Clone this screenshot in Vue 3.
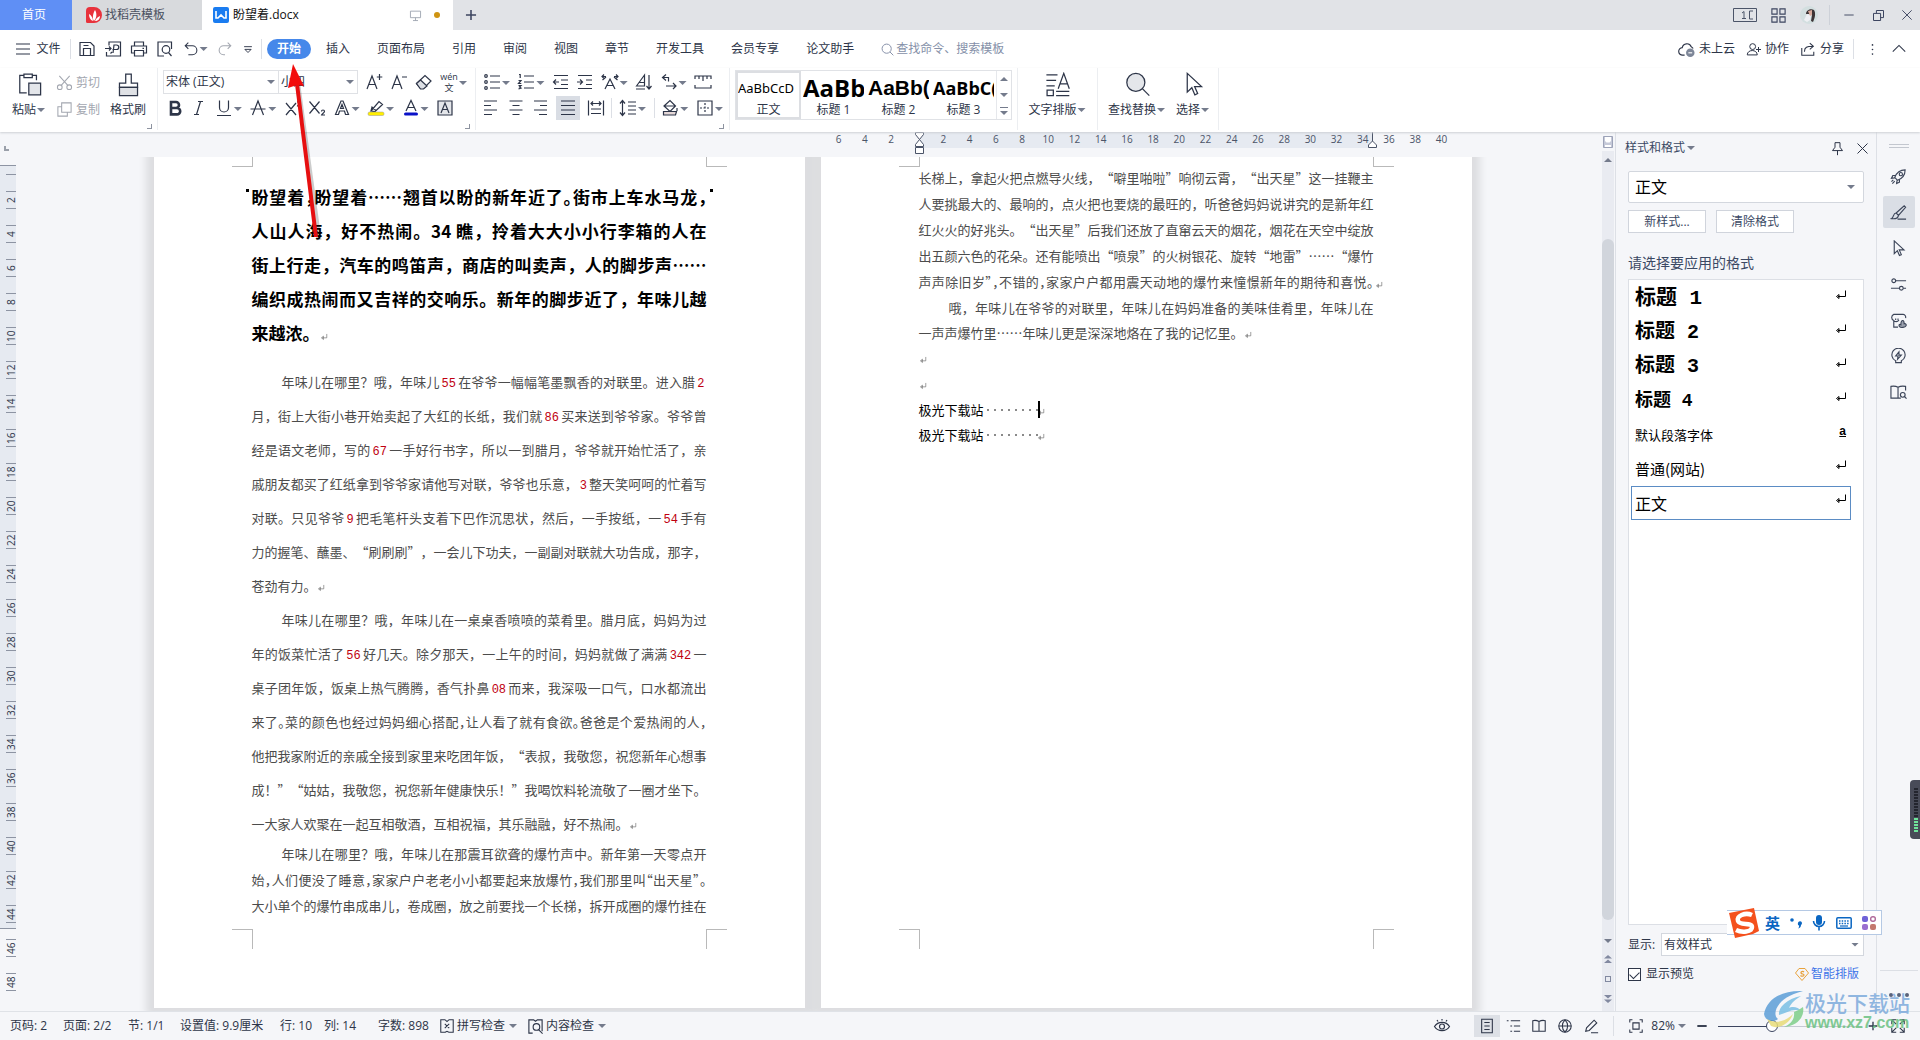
<script setup>
import { h, ref } from 'vue'

const icons = {
  save: '<path d="M2 2.500h10.500l3.500 3.500v9.500h-14zM5.500 15.500v-7h7v7M5.500 5.500h5"/>',
  pdf: '<path d="M5 5.500V2h11.500v14H2.500v-4M1 8.500h6M5 6.500l2 2-2 2M9 13l1-8h2.500a2 2 0 0 1 0 4.500H8.500M8 12l-1.500 1.500"/>',
  print: '<path d="M4.500 6V2h9v4M4.500 13h-3V6h15v7h-3M4.500 10.500h9v5.500h-9zM12.500 8.300h1.500"/>',
  preview: '<path d="M8 16H2V2h13.500v7M12.500 12.500l3 3.500"/><circle cx="10" cy="9.500" r="3.800"/>',
  undo: '<path d="M6 1.800 2.500 5.300 6 8.800M2.500 5.300h8a5 5 0 0 1 0 10.200H6"/>',
  redo: '<path d="M12 1.800l3.500 3.500L12 8.800M15.500 5.300h-8a5 5 0 0 0 0 10.200H9"/>',
  more: '<path d="M4 6h10M5 9.500l4 4 4-4z"/>',
  menu: '<path d="M2 4h14M2 9h14M2 14h14"/>',
  search: '<circle cx="8" cy="8" r="5.500"/><path d="M12 12l4 4"/>',
  aplus: '<path d="M2 16 7 3l5 13M4 11.500h6.200M14.500 1v6M11.800 4h5.500"/>',
  aminus: '<path d="M2 16 7 3l5 13M4 11.500h6.200M12 4h5"/>',
  eraser: '<path d="M1.500 10.500 10 2.500l6 5.500-7.500 7.500H5.500z"/><path d="M5.500 7l6.500 6-3.500 3H5.500l-4-5.500z" fill="#dcdfe4"/>',
  bold: '<path d="M5 3h5a3 3 0 0 1 0 6H5zM5 9h6a3.200 3.200 0 0 1 0 6.400H5z" stroke-width="2.600"/>',
  italic: '<path d="M8 2.500h5M4 15.500h5M10.500 2.500l-4 13"/>',
  underline: '<path d="M4.500 1.500v7a4.500 4.500 0 0 0 9 0v-7M2 16.500h14"/>',
  strike: '<path d="M3.500 16 9 2l5.500 14M1.500 10h15"/>',
  sup: '<path d="M2 4l10 12M12 4 2 16M13.500 3.500c0-2 3-2 3 0 0 1.200-3 2.500-3 3.500h3.500"/>',
  sub: '<path d="M1.500 2.500l10 12M11.500 2.500l-10 12M13.500 12.500c0-2 3-2 3 0 0 1.200-3 2.500-3 3.500h3.500"/>',
  outline: '<path d="M2.500 15.500 8 2h2l5.500 13.500h-3L11.500 12h-5l-1 3.500zM7.500 9.500h3L9 5.500z"/>',
  mark: '<path d="M4 12 12 2.500l3.500 3L8 12.500zM4 12l1-4 3.500 3"/><rect x="1" y="13" width="16" height="3.500" rx="1.500" fill="#ffee00" stroke="#999" stroke-width=".5"/>',
  color: '<path d="M4 12 9 1.500l5 10.500M6 8.500h6"/><rect x="2" y="13.500" width="14" height="3" rx="1.500" fill="#0a12c8" stroke="none"/>',
  boxa: '<path d="M2 2h14v14H2z" fill="#e4e6ea"/><path d="M5 14 9 4l4 10M6.500 10.500h5"/>',
  bullets: '<circle cx="3" cy="3" r="1.300"/><circle cx="3" cy="9" r="1.300"/><circle cx="3" cy="15" r="1.300"/><path d="M7 3h10M7 9h10M7 15h10"/>',
  numbers: '<path d="M2 1.500h1.200V5M1.500 7.500h2.500L1.500 10.500h2.800M1.500 12.500h2.500l-1.500 1.500 1.500 1-2.500 1M7 3h10M7 9h10M7 15h10"/>',
  outdent: '<path d="M2 2.500h14M9 7h7M9 11.500h7M2 15.500h14M7 9H1.500M4 6.500 1.500 9 4 11.500"/>',
  indent: '<path d="M2 2.500h14M10 7h6M10 11.500h6M2 15.500h14M1 9h5.500M4 6.500 6.500 9 4 11.500"/>',
  width: '<path d="M4 16 9 6l5 10M5.500 12.500h7M5 3.500H1.500M3 1.500l-2 2 2 2M13 3.500h3.500M15 1.500l2 2-2 2M1.500 7 5 4M16.500 7 13 4"/>',
  sort: '<path d="M1.500 13 9.500 2v11zM4.500 9.500h5M1 16h9M14 2v14M11.500 13l2.500 3 2.500-3"/>',
  wrap: '<path d="M6 1.500 2.500 4.500 6 7.500M2.500 4.500h6v4M6 13h9.500M13 10l3 3-3 3"/>',
  tabs: '<path d="M1 6V3h16v3M5 3v3M9 3v5M13 3v3M1 12v3h16v-3M6 15h6"/>',
  left: '<path d="M2 2h13M2 6.500h7M2 11h13M2 15.500h8"/>',
  center: '<path d="M2.500 2h13M5.500 6.500h7M2.500 11h13M5.500 15.500h7"/>',
  right: '<path d="M3 2h13M9 6.500h7M3 11h13M8 15.500h8"/>',
  justify: '<path d="M2 2h14M2 6.500h14M2 11h14M2 15.500h14"/>',
  spread: '<path d="M1.500 1.500v15M16.500 1.500v15M4 4.500h10M6 2.500l-2 2 2 2M12 2.500l2 2-2 2M4 10h10M4 14.500h10"/>',
  spacing: '<path d="M3.500 2v14M1 4.500l2.500-3L6 4.500M1 13.500l2.500 3 2.500-3M9 3h8M9 7h8M9 11h8M9 15h8"/>',
  fill: '<path d="M3 7 9 1.500l5.500 5.500-5.500 5.500zM3 7h11.500M16 9v3"/><path d="M2.500 12.500h13l-1 3.500h-12z" fill="#e5d8d8"/>',
  borders: '<path d="M2 2h14v14H2z"/><path d="M9 4v10M4 9h10" stroke-dasharray="2 1.500"/>',
  cut: '<circle cx="4" cy="14" r="2.500"/><circle cx="14" cy="14" r="2.500"/><path d="M3.500 2l9 10M14.500 2l-9 10"/>',
  copy: '<path d="M6 2h10v10H6zM6 6H2v10h10v-4"/>',
  paste: '<path d="M7 15H2V2.500h3M11 2.500h3V6M5 1.500h6v2.500H5z"/><path d="M8.500 8H17v8.500H8.500z" fill="#e4e6ea"/>',
  brush: '<path d="M7 1.500h4V8h4.500v3h-13V8H7z"/><path d="M2.500 11h13v6h-13z" fill="#dfe1e5"/>',
  layout: '<path d="M1 2h8M1 6h7M1 10h6M9.500 12 13.500 1l4 11M11 8.500h5M8 14h9.500M8 17h9.500"/><path d="M1.500 13h4.500v4H1.500z"/>',
  find: '<circle cx="7.800" cy="7.500" r="6.500" fill="#e4e6ea"/><path d="M12.500 12l5 5"/>',
  pointer: '<path d="M4.500 1v13.500l3.300-3.200 2.200 5.200 2-1-2.200-5h5z"/>',
  cloud: '<path d="M7 15H5a4 4 0 0 1-.5-8A5 5 0 0 1 14 6a4 4 0 0 1 2 2"/><circle cx="13" cy="12.500" r="4.500" fill="#7d8698" stroke="none"/><path d="M11 12.500h4" stroke="#fff"/>',
  person: '<circle cx="8" cy="5.500" r="3.500"/><path d="M1.500 15.500c0-7 12-7 12 0zM15 6v6M12 9h6"/>',
  share: '<path d="M2 8v8h13.500v-4M5 12c0-5 3-6 9-6M11 2.500 15 6l-4 3.500"/>',
  up: '<path d="M2 12 9 5l7 7"/>',
  dots: '<g fill="currentColor" stroke="none"><circle cx="9" cy="3.500" r="1"/><circle cx="9" cy="9" r="1"/><circle cx="9" cy="14.500" r="1"/></g>',
  monitor: '<path d="M2 3h14v9H2zM9 12v4M5.500 16h7"/>',
  plus: '<path d="M9 2.500v13M2.500 9h13" stroke-width="2"/>',
  apps: '<path d="M2 2h5.500v5.500H2zM10.500 2H16v5.500h-5.500zM2 10.500h5.500V16H2zM10.500 10.500H16V16h-5.500z"/>',
  min: '<path d="M3 9h12"/>',
  restore: '<path d="M3 6.500h8.500V15H3zM6.500 6.500V3H15v8.500h-3.500"/>',
  close: '<path d="M3 3l12 12M15 3 3 15"/>',
  pin: '<path d="M6 2h6v5.500l3 4H3l3-4zM9 11.500V17"/>',
  rocket: '<path d="M5 10C7 5 11 2 16 2c0 5-3 9-8 11zM6 8H3l-1.500 3 3.500-.5M10 12v3l-3 1.500.5-3.500M3.500 12.500l-2 2M5 14l-2.500 2.500"/><circle cx="11.500" cy="6.500" r="1.700"/>',
  pen: '<path d="M6.500 9.500 15 2l1.500 1.500L9 12zM6.500 9.500C3 9.500 4.500 14 1.500 15.500c4 .5 7-.5 7.500-3.500M8 16h9"/>',
  sliders: '<circle cx="4" cy="5" r="2"/><path d="M6 5h11M1 13h9M14 13h3"/><circle cx="12" cy="13" r="2"/>',
  shape: '<path d="M8.500 16H4V9a3.500 3.500 0 0 1 0-6.500h10a3 3 0 0 1 2.500 4M6 7v1.500M8.500 7v1.500M4 9.500c2 1 4.500.5 5.500-1"/><path d="M10 15.500c-1-2 0-3 1.500-2 0-3 1-4.500 2-4.500s1.500 2 1.500 3.500c1.500-.5 2.500.5 2 2-1 2-5.500 2.500-7 1z" fill="#9ba1ae"/>',
  bulb: '<path d="M6 15.500v-2A7 7 0 1 1 12 13.500v2zM9.500 4 6 8.500h2.500L8 12l4-4.500H9.500z"/>',
  book: '<path d="M8.500 3.500C6 2 3.500 2 1 2.500V15h7.500zM8.500 15V3.500C11 2 14 2 16.500 2.500V7M8.500 15h3"/><circle cx="13.500" cy="11.500" r="2.500"/><path d="M15.500 13.500l2 2"/>',
  eye: '<path d="M1.500 9.500C5 4 13 4 16.500 9.500 13 15 5 15 1.500 9.500zM9 2v1.500M4 3l1 1.500M14 3l-1 1.500"/><circle cx="9" cy="9.500" r="2.500"/>',
  page: '<path d="M3 1.500h12v15H3zM6 5h6M6 9h6M6 13h6"/>',
  list: '<path d="M2 3h2M6.500 3H17M6 9h2M10 9h7M6 15h2M10 15h7"/>',
  read: '<path d="M9 4C6.500 2.500 4 2.500 2 3v12h7zM9 4c2.500-1.500 5-1.500 7-1v12H9z"/>',
  globe: '<circle cx="9" cy="9" r="7"/><path d="M2 9h14M9 2c-4 4-4 10 0 14M9 2c4 4 4 10 0 14"/>',
  write: '<path d="M3 15l1-4 8.500-8.500 3 3L7 14zM9 16.500h8"/>',
  fit: '<path d="M5 2H2v3M13 2h3v3M5 16H2v-3M13 16h3v-3M5.500 5.500h7v7h-7z"/>',
  full: '<path d="M7 2H2v5M11 2h5v5M7 16H2v-5M11 16h5v-5M2 2l5 5M16 2l-5 5M2 16l5-5M16 16l-5-5"/>',
  spell: '<path d="M7 2H2v14h5M11 2h5v14h-5M7 2l2 2 2-2M7 16l2-1 2 1M6.500 6.500l5 5M11.500 6.500l-5 5"/>',
  content: '<path d="M6 16H2V2h5l2 1.500L11 2h5v12"/><circle cx="10" cy="9.500" r="3.500"/><path d="M12.500 12.500l4 4"/>',
  ret: '<path d="M14 3.500v7H5M8 7.500l-3.500 3L8 13.500z"/>',
}
const Icon = (p) => h('svg', {
  class: 'ico', viewBox: '0 0 18 18', width: p.s || 18, height: p.s || 18,
  fill: 'none', stroke: 'currentColor', 'stroke-width': p.w || 1.2, 'aria-hidden': 'true', innerHTML: icons[p.n],
})
Icon.props = ['n', 's', 'w']

const menus = ['插入', '页面布局', '引用', '审阅', '视图', '章节', '开发工具', '会员专享', '论文助手']
const quick = [['save', '保存'], ['pdf', '输出为PDF'], ['print', '打印'], ['preview', '打印预览']]
const fontTop = [['aplus', '增大字号'], ['aminus', '减小字号'], ['eraser', '清除格式']]
const fontBottom = [
  ['bold', '加粗'], ['italic', '倾斜'], ['underline', '下划线', 1], ['strike', '删除线', 1], ['sup', '上标'],
  ['sub', '下标'], ['outline', '文字效果', 1], ['mark', '突出显示', 1], ['color', '字体颜色', 1], ['boxa', '字符底纹'],
]
const paraTop = [
  ['bullets', '项目符号', 1], ['numbers', '编号', 1], ['outdent', '减少缩进'], ['indent', '增加缩进'],
  ['width', '中文版式', 1], ['sort', '排序'], ['wrap', '换行标记', 1], ['tabs', '制表位'],
]
const paraBottom = [
  ['left', '左对齐'], ['center', '居中'], ['right', '右对齐'], ['justify', '两端对齐'], ['spread', '分散对齐'], null,
  ['spacing', '行距', 1], null, ['fill', '底纹颜色', 1], ['borders', '边框', 1],
]
const gallery = [['AaBbCcD', '正文', 'g0'], ['AaBb', '标题 1', 'g1'], ['AaBb(', '标题 2', 'g2'], ['AaBbC(', '标题 3', 'g3']]
const hMarks = [6, 4, 2, '', ...Array.from({ length: 20 }, (_, i) => (i + 1) * 2)]
const vMarks = Array.from({ length: 24 }, (_, i) => (i + 1) * 2)

const heading = [
  ['盼望着，盼望着……翘首以盼的新年近了。街市上车水马龙，', 'half'],
  ['人山人海，好不热闹。34 瞧，拎着大大小小行李箱的人在'],
  ['街上行走，汽车的鸣笛声，商店的叫卖声，人的脚步声……'],
  ['编织成热闹而又吉祥的交响乐。新年的脚步近了，年味儿越'],
  ['来越浓。', 'end'],
]
const wide = [
  [
    ['年味儿在哪里？哦，年味儿55在爷爷一幅幅笔墨飘香的对联里。进入腊2', 'first'],
    ['月，街上大街小巷开始卖起了大红的长纸，我们就86买来送到爷爷家。爷爷曾'],
    ['经是语文老师，写的67一手好行书字，所以一到腊月，爷爷就开始忙活了，亲'],
    ['戚朋友都买了红纸拿到爷爷家请他写对联，爷爷也乐意，3整天笑呵呵的忙着写'],
    ['对联。只见爷爷9把毛笔杆头支着下巴作沉思状，然后，一手按纸，一54手有'],
    ['力的握笔、蘸墨、“刷刷刷”，一会儿下功夫，一副副对联就大功告成，那字，'],
    ['苍劲有力。', 'end'],
  ],
  [
    ['年味儿在哪里？哦，年味儿在一桌桌香喷喷的菜肴里。腊月底，妈妈为过', 'first'],
    ['年的饭菜忙活了56好几天。除夕那天，一上午的时间，妈妈就做了满满342一'],
    ['桌子团年饭，饭桌上热气腾腾，香气扑鼻08而来，我深吸一口气，口水都流出'],
    ['来了。菜的颜色也经过妈妈细心搭配，让人看了就有食欲。爸爸是个爱热闹的人，', 'half'],
    ['他把我家附近的亲戚全接到家里来吃团年饭，“表叔，我敬您，祝您新年心想事'],
    ['成！”“姑姑，我敬您，祝您新年健康快乐！”我喝饮料轮流敬了一圈才坐下。'],
    ['一大家人欢聚在一起互相敬酒，互相祝福，其乐融融，好不热闹。', 'end'],
  ],
]
const tight = [
  ['年味儿在哪里？哦，年味儿在那震耳欲聋的爆竹声中。新年第一天零点开', 'first'],
  ['始，人们便没了睡意，家家户户老老小小都要起来放爆竹，我们那里叫“出天星”。', 'half'],
  ['大小单个的爆竹串成串儿，卷成圈，放之前要找一个长梯，拆开成圈的爆竹挂在'],
]
const second = [
  [
    ['长梯上，拿起火把点燃导火线，“噼里啪啦”响彻云霄，“出天星”这一挂鞭主'],
    ['人要挑最大的、最响的，点火把也要烧的最旺的，听爸爸妈妈说讲究的是新年红'],
    ['红火火的好兆头。“出天星”后我们还放了直窜云天的烟花，烟花在天空中绽放'],
    ['出五颜六色的花朵。还有能喷出“喷泉”的火树银花、旋转“地雷”……“爆竹'],
    ['声声除旧岁”，不错的，家家户户都用震天动地的爆竹来憧憬新年的期待和喜悦。', 'half hang'],
  ],
  [
    ['哦，年味儿在爷爷的对联里，年味儿在妈妈准备的美味佳肴里，年味儿在', 'first'],
    ['一声声爆竹里……年味儿更是深深地烙在了我的记忆里。', 'end'],
  ],
]
const split = (t) => t.split(/(\d+)/).filter(Boolean)
const isNum = (t) => /^\d+$/.test(t)
const marked = (c) => /end|hang/.test(c || '')

const styles = [
  ['标题 1', 's1'], ['标题 2', 's2'], ['标题 3', 's3'], ['标题 4', 's4'],
  ['默认段落字体', 's5'], ['普通(网站)', 's6'], ['正文', 's7'],
]
const rail = ['rocket', 'pen', 'pointer', 'sliders', 'shape', 'bulb', 'book']
const railNames = ['推荐', '样式和格式', '选择', '设置', '素材', '灵感', '阅读']
const views = [['page', '页面视图'], ['list', '大纲视图'], ['read', '阅读版式'], ['globe', 'Web版式'], ['write', '写作模式']]
const zoom = ref(36)
const preview = ref(true)
</script>

<template>
  <div class="app">
    <header class="titlebar">
      <button class="tab home">首页</button>
      <button class="tab docer">
        <svg width="16" height="16" viewBox="0 0 16 16"><path d="M4 0h4a8 8 0 0 1 0 16H1.500A1.500 1.500 0 0 1 0 14.500V4a4 4 0 0 1 4-4z" fill="#e8323c"/><path d="M8 14C6 12 7 6 9 3c2 3 2 8-1 11zM7 14C4 13 3 10 3 7c2 1 4 4 4 7zM9 14c1-2 2-4 5-5 0 3-2 5-5 5z" fill="#fff"/></svg>
        找稻壳模板
      </button>
      <button class="tab doc">
        <svg width="16" height="16" viewBox="0 0 16 16"><rect width="16" height="16" rx="2" fill="#1a7cf0"/><path d="M3 4v7h2L8 8l3 3h2V4" fill="none" stroke="#fff" stroke-width="1.600"/></svg>
        <span>盼望着.docx</span>
        <Icon n="monitor" s="13" class="mon" /><i class="unsaved"></i>
      </button>
      <button class="plain add" aria-label="新建"><Icon n="plus" s="14" /></button>
      <div class="win">
        <svg width="24" height="14" viewBox="0 0 24 14" fill="none" stroke="#4b5468"><path d="M.5.5h23v13H.5zM9 5l2-1.500v7M9 10.500h4M20 3h-3.500v8H20"/></svg>
        <Icon n="apps" s="17" />
        <svg class="avatar" width="18" height="18" viewBox="0 0 18 18"><circle cx="9" cy="9" r="9" fill="#d3dfe0"/><path d="M6 8c0-4 5-6 8-4 2 3 1 8-1 12l-2-1 1-6-3-1z" fill="#3c3436"/><path d="M7 8l4 1-1 5-3 2-3-2z" fill="#eef0f4"/><path d="M8 5l4-1v5l-2 1z" fill="#d8aa9c"/></svg>
        <i class="bar"></i>
        <button class="plain" aria-label="最小化"><Icon n="min" s="14" /></button>
        <button class="plain" aria-label="还原"><Icon n="restore" s="15" /></button>
        <button class="plain" aria-label="关闭"><Icon n="close" s="14" /></button>
      </div>
    </header>

    <nav class="menubar">
      <button class="plain file"><Icon n="menu" s="18" />文件</button>
      <i class="bar"></i>
      <div class="quick">
        <button v-for="q in quick" :key="q[0]" class="plain" :aria-label="q[1]"><Icon :n="q[0]" s="18" /></button>
        <button class="plain" aria-label="撤销"><Icon n="undo" s="16" /><i class="caret"></i></button>
        <button class="plain dim" aria-label="恢复"><Icon n="redo" s="16" /></button>
        <button class="plain" aria-label="更多"><Icon n="more" s="14" /></button>
      </div>
      <i class="bar"></i>
      <button class="plain current">开始</button>
      <div class="menus"><button v-for="m in menus" :key="m" class="plain">{{ m }}</button></div>
      <label class="search"><Icon n="search" s="15" /><input type="text" placeholder="查找命令、搜索模板" aria-label="查找命令" /></label>
      <div class="account">
        <button class="plain"><Icon n="cloud" s="17" />未上云</button>
        <button class="plain"><Icon n="person" s="15" />协作</button>
        <button class="plain"><Icon n="share" s="16" />分享</button>
        <i class="bar"></i>
        <button class="plain" aria-label="更多"><Icon n="dots" s="15" /></button>
        <button class="plain" aria-label="收起功能区"><Icon n="up" s="16" /></button>
      </div>
    </nav>

    <section class="ribbon">
      <div class="group clip">
        <button class="big"><Icon n="paste" s="25" w=".9" /><span>粘贴<i class="caret"></i></span></button>
        <div class="stack dim">
          <button class="plain"><Icon n="cut" s="17" w="1.100" />剪切</button>
          <button class="plain"><Icon n="copy" s="17" w="1.100" />复制</button>
        </div>
        <button class="big"><Icon n="brush" s="25" w=".9" /><span>格式刷</span></button>
        <i class="corner"></i>
      </div>
      <div class="group font">
        <div class="row">
          <div class="combos">
            <label class="combo family"><select aria-label="字体"><option>宋体 (正文)</option></select></label>
            <label class="combo size"><select aria-label="字号"><option>小四</option></select></label>
          </div>
          <button v-for="t in fontTop" :key="t[0]" class="plain" :aria-label="t[1]"><Icon :n="t[0]" /></button>
          <button class="plain" aria-label="拼音指南"><span class="pinyin"><span>wén</span><span>文</span></span><i class="caret"></i></button>
        </div>
        <div class="row">
          <button v-for="t in fontBottom" :key="t[0]" class="plain" :aria-label="t[1]"><Icon :n="t[0]" /><i v-if="t[2]" class="caret"></i></button>
        </div>
        <i class="corner"></i>
      </div>
      <div class="group para">
        <div class="row top">
          <button v-for="t in paraTop" :key="t[0]" class="plain" :aria-label="t[1]"><Icon :n="t[0]" /><i v-if="t[2]" class="caret"></i></button>
        </div>
        <div class="row">
          <template v-for="(t, i) in paraBottom" :key="i">
            <i v-if="!t" class="bar"></i>
            <button v-else class="plain" :class="{ on: t[0] === 'justify' }" :aria-label="t[1]"><Icon :n="t[0]" /><i v-if="t[2]" class="caret"></i></button>
          </template>
        </div>
        <i class="corner"></i>
      </div>
      <div class="group styles">
        <div class="gallery">
          <button v-for="(g, i) in gallery" :key="g[1]" class="card" :class="{ picked: i === 0 }"><span class="sample" :class="g[2]">{{ g[0] }}</span><span>{{ g[1] }}</span></button>
          <div class="steps">
            <button class="plain" aria-label="上一行"><i class="caret flip"></i></button>
            <button class="plain" aria-label="下一行"><i class="caret"></i></button>
            <button class="plain" aria-label="展开"><i class="caret lined"></i></button>
          </div>
        </div>
      </div>
      <div class="group one"><button class="big"><Icon n="layout" s="25" w=".9" /><span>文字排版<i class="caret"></i></span></button></div>
      <div class="group two">
        <button class="big"><Icon n="find" s="25" w=".9" /><span>查找替换<i class="caret"></i></span></button>
        <button class="big"><Icon n="pointer" s="25" w=".9" /><span>选择<i class="caret"></i></span></button>
      </div>
    </section>

    <main class="work">
      <div class="vruler">
        <i class="tabstop"></i>
        <ol><li v-for="m in vMarks" :key="m"><span>{{ m }}</span></li></ol>
      </div>

      <div class="editor">
        <div class="hruler">
          <div class="blank"></div>
          <div class="scale">
            <span v-for="(m, i) in hMarks" :key="i">{{ m }}</span>
            <svg class="stop a" width="11" height="22" viewBox="0 0 11 22" fill="#fff" stroke="#4b5468"><path d="M1.500.5h8v2l-4 5-4-5zM5.500 7.500l4 5v2h-8v-2zM1.500 15.500h8v6h-8z"/></svg>
            <svg class="stop b" width="11" height="16" viewBox="0 0 11 16" fill="#fff" stroke="#4b5468"><path d="M5.500 0v9M5.500 9l4 4v2.500h-8V13z"/></svg>
          </div>
        </div>
        <div class="canvas">
          <article class="page">
            <i class="mark tl"></i><i class="mark tr"></i><i class="mark bl"></i><i class="mark br"></i>
            <h1>
              <span v-for="(l, i) in heading" :key="i" class="line" :class="l[1]">{{ l[0] }}<Icon v-if="marked(l[1])" n="ret" s="10" class="ret" /></span>
            </h1>
            <p v-for="(p, k) in wide" :key="k" class="wide">
              <span v-for="(l, i) in p" :key="i" class="line" :class="l[1]"><template v-for="(t, j) in split(l[0])" :key="j"><b v-if="isNum(t)">{{ t }}</b><template v-else>{{ t }}</template></template><Icon v-if="marked(l[1])" n="ret" s="10" class="ret" /></span>
            </p>
            <p><span v-for="(l, i) in tight" :key="i" class="line" :class="l[1]">{{ l[0] }}</span></p>
          </article>
          <article class="page next">
            <i class="mark tl"></i><i class="mark tr"></i><i class="mark bl"></i><i class="mark br"></i>
            <p v-for="(p, k) in second" :key="k" :class="{ short: k === 1 }">
              <span v-for="(l, i) in p" :key="i" class="line" :class="l[1]">{{ l[0] }}<Icon v-if="marked(l[1])" n="ret" s="10" class="ret" /></span>
            </p>
            <p><span class="line end"><Icon n="ret" s="10" class="ret" /></span></p>
            <p><span class="line end"><Icon n="ret" s="10" class="ret" /></span></p>
            <p class="short ink"><span class="line end">极光下载站<i class="spaces"></i><i class="cursor"></i><Icon n="ret" s="10" class="ret" /></span></p>
            <p class="short ink"><span class="line end">极光下载站<i class="spaces"></i><Icon n="ret" s="10" class="ret" /></span></p>
          </article>
        </div>
      </div>

      <div class="scroll">
        <svg width="10" height="12" viewBox="0 0 10 12" fill="#fff" stroke="#9da3b8"><path d="M.5.500h9v11h-9z" fill="#c5c9d8"/><path d="M2 1h6v4L6.500 6.500h-3L2 5zM2 9h6v2H2z" stroke="none"/></svg>
        <div class="track">
          <i class="caret flip"></i>
          <div class="thumb"></div>
          <i class="caret"></i>
          <svg width="8" height="8" viewBox="0 0 8 8" fill="#8289a0"><path d="M4 0l4 3.500H0zM4 4.500L8 8H0z"/></svg>
          <i class="sq"></i>
          <svg width="8" height="8" viewBox="0 0 8 8" fill="#8289a0"><path d="M4 8l4-3.500H0zM4 3.500L8 0H0z"/></svg>
        </div>
      </div>

      <aside class="panel">
        <div class="head"><h2>样式和格式<i class="caret"></i></h2>
          <button class="plain" aria-label="固定"><Icon n="pin" s="15" /></button>
          <button class="plain" aria-label="关闭窗格"><Icon n="close" s="15" /></button>
        </div>
        <label class="combo style"><select aria-label="当前样式"><option>正文</option></select></label>
        <div class="actions"><button>新样式...</button><button>清除格式</button></div>
        <h3>请选择要应用的格式</h3>
        <ul class="list">
          <li v-for="(s, i) in styles" :key="s[0]" :class="[s[1], { sel: i === 6 }]">
            <span>{{ s[0] }}</span>
            <u v-if="i === 4">a</u>
            <svg v-else width="10" height="10" viewBox="0 0 10 10" fill="none" stroke="#000"><path d="M9.500.500V6.500H2M3 4.500v4L.500 6.500z"/></svg>
          </li>
        </ul>
        <div class="show"><label for="scope">显示:</label><span class="combo scope"><select id="scope"><option>有效样式</option></select></span></div>
        <div class="foot">
          <label><input v-model="preview" type="checkbox" />显示预览</label>
          <a href="#"><svg width="14" height="13" viewBox="0 0 14 13" fill="none" stroke="#e8a23c"><path d="M4 .5h6L13.500 5 7 12.500.500 5z"/><path d="M9 4c-1-1-3.500-.5-3 1s3 .5 3 2-2.500 1.500-3.500.500" stroke-width="1.200"/></svg>智能排版</a>
        </div>
      </aside>

      <aside class="rail">
        <i class="grip"></i>
        <button v-for="(r, i) in rail" :key="r" class="plain" :class="{ on: i === 1 }" :aria-label="railNames[i]"><Icon :n="r" s="17" /></button>
        <div class="tail"><i></i><i></i><i></i></div>
      </aside>
    </main>

    <footer class="status">
      <span class="f1">页码: 2</span><span class="f2">页面: 2/2</span><span class="f3">节: 1/1</span><span class="f4">设置值: 9.9厘米</span>
      <span class="f5">行: 10</span><span class="f6">列: 14</span><span class="f7">字数: 898</span>
      <button class="plain"><Icon n="spell" s="16" />拼写检查<i class="caret"></i></button>
      <button class="plain"><Icon n="content" s="17" />内容检查<i class="caret"></i></button>
      <div class="right">
        <button class="plain eye" aria-label="护眼模式"><Icon n="eye" /></button>
        <button v-for="(v, i) in views" :key="v[0]" class="plain view" :class="{ on: i === 0 }" :aria-label="v[1]"><Icon :n="v[0]" s="16" /></button>
        <i class="bar"></i>
        <button class="plain fit" aria-label="最佳显示比例"><Icon n="fit" s="16" /></button>
        <button class="plain pct">82%<i class="caret"></i></button>
        <button class="plain step" aria-label="缩小"><Icon n="min" s="14" w="2.400" /></button>
        <input v-model="zoom" type="range" min="0" max="100" aria-label="显示比例" />
        <button class="plain step" aria-label="放大"><Icon n="plus" s="12" /></button>
        <button class="plain full" aria-label="全屏"><Icon n="full" s="16" /></button>
      </div>
    </footer>

    <svg class="pointer" width="50" height="185" viewBox="0 0 50 185">
      <path d="M13 24 34 178" stroke="#000" stroke-opacity=".2" stroke-width="5" />
      <path d="M10 22h4l19 153h-4z" fill="#e60f10" />
      <path d="M8 2 19 24l-7-1-9 3z" fill="#f20c0c" />
    </svg>

    <div class="ime">
      <svg width="34" height="32" viewBox="0 0 34 32"><path d="M2 6 27 1l5 23-6 3-18 4z" fill="#f4511e"/><path d="M25 8C18 5 9 9 11 14s14 1 14 6-10 6-16 3" fill="none" stroke="#fff" stroke-width="4.500"/></svg>
      <strong>英</strong>
      <svg width="12" height="12" viewBox="0 0 12 12" fill="#0a66c2"><circle cx="2" cy="3" r="1.800"/><path d="M8 6a2 2 0 1 1 3 2c0 2-1 3-3 3.500 1-1 1.200-2 1-3A2 2 0 0 1 8 6z"/></svg>
      <svg width="14" height="16" viewBox="0 0 14 16"><rect x="4" width="6" height="10" rx="3" fill="#0a66c2"/><path d="M1.500 6a5.500 5.500 0 0 0 11 0M7 12v3.500" fill="none" stroke="#0a66c2" stroke-width="1.600"/></svg>
      <svg width="16" height="12" viewBox="0 0 16 12"><rect x=".8" y=".8" width="14.400" height="10.400" rx="1" fill="none" stroke="#0a66c2" stroke-width="1.500"/><path d="M3 4h10M3 6.500h10" stroke="#0a66c2" stroke-width="1.500" stroke-dasharray="1.500 1.200"/><path d="M4 9h8" stroke="#0a66c2" stroke-width="1.200"/></svg>
      <svg width="14" height="14" viewBox="0 0 14 14"><rect width="6" height="6" rx="2" fill="#6f62d8"/><rect x="8.700" y=".7" width="4.600" height="4.600" rx="2" fill="none" stroke="#b06a9a" stroke-width="1.400"/><rect y="8" width="6" height="6" rx="2" fill="#9a6fd0"/><rect x="8" y="8" width="6" height="6" rx="2" fill="#c4786e"/></svg>
    </div>

    <div class="meter"><i></i></div>

    <div class="brand">
      <svg width="42" height="40" viewBox="0 0 42 40"><path d="M40 1C20 0 4 8 1 24c1 7 9 9 14 5C9 25 12 8 40 1z" fill="#5d9fd8"/><path d="M38 6C24 9 15 17 16 25c8-2 13-7 22-4-2-4-9-5-12-3 2-5 7-9 12-12z" fill="#79bfe4"/><path d="M40 17c2 10-6 19-19 20 7-3 11-8 10-15 3-1 6-3 9-5z" fill="#7fcf8a"/><path d="M4 29c8 5 18 3 26-5-3 9-14 16-22 12z" fill="#e8dc78"/></svg>
      <div><span>极光下载站</span><span class="url">www.xz7.com</span></div>
    </div>
  </div>
</template>

<style>
body { background: #f5f6f9; }
</style>

<style scoped>
.app { position: relative; min-height: 100vh; display: flex; flex-direction: column; overflow: hidden; font: 12px/16px "Open Sans", "Noto Sans CJK SC", sans-serif; color: #2d3548; }
.app * { box-sizing: border-box; }
button, select, input { font: inherit; color: inherit; }
i { font-style: normal; }
.ico { flex: none; display: block; }
.plain { display: flex; align-items: center; justify-content: center; padding: 0; border: 0; background: none; white-space: nowrap; }
.caret { display: inline-block; flex: none; width: 10px; height: 4px; background: #747b8c; clip-path: polygon(1px 0, 9px 0, 5px 4px); }
.caret.flip { transform: rotate(180deg); }
.caret.lined { height: 8px; clip-path: polygon(1px 0, 9px 0, 9px 1px, 1px 1px, 1px 4px, 9px 4px, 5px 8px, 1px 4px, 1px 0); }
.bar { flex: none; width: 1px; height: 20px; background: #dcdfe5; }
.dim { color: #a3a7b0; }

.titlebar { display: flex; height: 30px; background: #e1e3e7; color: #3c4560; }
.tab { display: flex; align-items: center; border: 0; padding: 0; background: none; }
.home { width: 72px; padding-right: 4px; justify-content: center; background: #5f8ff5; color: #fff; }
.docer { width: 130px; padding-left: 14px; gap: 3px; background: #d8dadd; color: #4a5060; }
.doc { width: 251px; padding-left: 11px; gap: 4px; background: #fff; color: #111; }
.mon { margin-left: auto; color: #9aa1ad; }
.unsaved { width: 6px; height: 6px; margin: 0 13px 0 8px; border-radius: 3px; background: #cf9412; }
.add { width: 36px; }
.win { display: flex; align-items: center; gap: 13px; margin-left: auto; padding-right: 5px; }
.win .plain { width: 16px; }
.win .bar { margin: 0 -2px; background: #cdd1d8; }

.menubar { display: flex; align-items: center; height: 38px; background: #fff; }
.file { gap: 4px; width: 70px; padding-left: 5px; }
.quick { display: flex; align-items: center; width: 190px; padding: 0 6px 0 7px; justify-content: space-between; }
.current { width: 44px; height: 20px; margin: 0 15px 0 5px; border-radius: 10px; background: #4688ea; color: #fff; font-weight: 700; }
.menus { display: flex; gap: 27px; }
.search { display: flex; align-items: center; gap: 1px; margin-left: 26px; color: #8993ab; }
.search input { width: 130px; border: 0; padding: 0; outline: 0; background: none; }
.search input::placeholder { color: #8590a8; }
.account { display: flex; align-items: center; gap: 11px; margin-left: auto; padding-right: 13px; }
.account .plain { gap: 4px; }
.account .bar { margin: 0 0 0 -2px; }

.ribbon { display: flex; height: 64px; background: #fff; box-shadow: 0 1px 2px #cdd0d5; position: relative; z-index: 2; }
.group { position: relative; display: flex; flex: none; height: 62px; border-right: 1px solid #eceef1; }
.corner { position: absolute; right: 5px; bottom: 1px; width: 5px; height: 5px; border: solid #8d93a0; border-width: 0 1px 1px 0; }
.big { display: flex; flex-direction: column; align-items: center; gap: 5px; padding: 4px 0 0; border: 0; background: none; }
.big span { display: flex; align-items: center; white-space: nowrap; }
.clip { width: 158px; padding-left: 12px; gap: 10px; }
.stack { display: flex; flex-direction: column; gap: 10px; padding-top: 6px; }
.stack .plain { gap: 3px; }
.row { display: flex; align-items: center; justify-content: space-between; height: 24px; }
.row .caret { margin-top: 2px; }
.font { width: 318px; flex-direction: column; gap: 2px; padding: 2px 7px 0 5px; }
.font .row + .row { padding: 0 14px 0 3px; }
.combos { display: flex; border: 1px solid #dfe1e5; }
.combo { position: relative; display: block; }
.combo select { display: block; width: 100%; height: 100%; appearance: none; border: 0; outline: 0; padding: 0 16px 0 2px; background: none; }
.combo::after { content: ""; position: absolute; right: 2px; top: 50%; width: 10px; height: 4px; margin-top: -2px; background: #747b8c; clip-path: polygon(1px 0, 9px 0, 5px 4px); pointer-events: none; }
.family { width: 115px; height: 22px; border-right: 1px solid #dfe1e5; }
.size { width: 78px; height: 22px; }
.pinyin { display: flex; flex-direction: column; align-items: center; width: 18px; line-height: 11px; font-size: 9px; }
.para { width: 254px; flex-direction: column; gap: 2px; padding: 2px 5px 0 6px; }
.para .top { padding-right: 12px; padding-left: 1px; }
.para .on { width: 24px; height: 24px; background: #d9dde4; }
.styles { width: 288px; padding: 2px 5px 0; }
.gallery { display: flex; width: 277px; height: 50px; border: 1px solid #e0e2e6; }
.card { display: flex; flex-direction: column; align-items: center; flex: 1; min-width: 0; padding: 0; border: 2px solid transparent; background: none; overflow: hidden; white-space: nowrap; }
.card.picked { border-color: #dcdee2; }
.sample { height: 31px; line-height: 30px; align-self: flex-start; color: #000; font-family: "Noto Sans", sans-serif; }
.sample + span { line-height: 14px; }
.g0 { font-size: 13px; }
.g1, .g2, .g3 { font-weight: 700; font-family: "Open Sans", sans-serif; }
.g1 { font-size: 24px; }
.g2 { font-size: 21px; font-family: "Liberation Sans", sans-serif; }
.g3 { font-size: 18px; }
.steps { display: flex; flex-direction: column; width: 15px; border-left: 1px solid #e6e8ec; }
.steps .plain { flex: 1; }
.one { width: 80px; justify-content: center; }
.two { width: 121px; padding-left: 10px; gap: 10px; }

.work { display: flex; flex: 1; }
.vruler { width: 16px; padding-top: 14px; background: #f5f6f9; }
.tabstop { display: block; width: 5px; height: 5px; margin: 0 0 14px 4px; border: solid #9aa0aa; border-width: 0 0 2px 2px; }
.vruler ol { margin: 0; padding: 25px 0 0; list-style: none; border-top: 1px solid #8d94a3; background: linear-gradient(#8d94a3, #8d94a3) 6px 8px / 10px 1px no-repeat, linear-gradient(#8d94a3, #8d94a3) 0 762px / 16px 1px no-repeat, linear-gradient(#e6eaf1 763px, #f5f6f9 763px); }
.vruler li { height: 34px; padding-left: 6px; }
.vruler li span { display: flex; align-items: center; justify-content: center; width: 10px; height: 18px; border: solid #8d94a3; border-width: 1px 0; writing-mode: vertical-rl; transform: rotate(180deg); font-size: 10px; line-height: 10px; }
.editor { flex: 1; min-width: 0; display: flex; flex-direction: column; background: #f5f6f9; }
.hruler, .canvas { display: flex; justify-content: center; gap: 16px; padding-left: 8px; }
.hruler { height: 25px; }
.blank, .scale, .page { width: 651px; flex: none; }
.scale { position: relative; display: grid; grid-template-columns: repeat(24, 1fr); height: 16px; padding: 0 17px 0 5px; background: linear-gradient(90deg, transparent 98px, #e6eaf1 98px 552px, transparent 552px); text-align: center; font-size: 10px; line-height: 15px; color: #4b5468; }
.stop { position: absolute; top: 0; }
.stop.a { left: 93px; }
.stop.b { right: 94px; }
.canvas { flex: 1; overflow: hidden; padding-bottom: 3px; }
.page { position: relative; padding: 23px 98px 89px; background: #fff; box-shadow: 0 0 8px 8px rgba(0, 0, 0, .1); color: #4c4c4c; font: 13px/26px "Noto Sans CJK SC", sans-serif; text-spacing-trim: space-all; }
.page.next { padding-top: 8px; }
.mark { position: absolute; width: 21px; height: 20px; border: 0 solid #b9b9b9; }
.tl, .tr { top: 0; height: 10px; border-bottom-width: 1px; }
.bl, .br { bottom: 59px; border-top-width: 1px; }
.tl, .bl { left: 78px; border-right-width: 1px; }
.tr, .br { right: 78px; border-left-width: 1px; }
.page h1 { position: relative; margin: 0 0 15px; font-size: 17px; line-height: 34px; font-weight: 700; color: #000; }
.page h1::before, .page h1::after { content: ""; position: absolute; top: 9px; width: 3px; height: 3px; background: #000; }
.page h1::before { left: -6px; }
.page h1::after { right: -6px; }
.page p { margin: 0; }
.page .wide { line-height: 34px; }
.page .short { line-height: 25px; }
.page .ink { color: #000; }
.line { position: relative; display: block; height: 1lh; white-space: nowrap; text-align: justify; text-align-last: justify; }
.line.first { padding-left: 30px; }
.line.end { text-align-last: left; }
.line.half { font-feature-settings: "halt"; }
.line b { margin: 0 2px; font-weight: 400; line-height: 16px; color: #c00010; font-family: "Liberation Mono", monospace; font-size: 12px; }
.ret { display: inline-block; color: #6f6f6f; vertical-align: -2px; }
.line.end .ret { margin-left: -1px; }
.hang .ret { position: absolute; right: -10px; bottom: 5px; }
.spaces { display: inline-block; width: 56px; height: 2px; margin-right: -3px; vertical-align: 4px; background: repeating-linear-gradient(90deg, transparent 0 3px, #8a8a8a 3px 5px, transparent 5px 7px); }
.cursor { position: absolute; top: 4px; left: 119px; width: 2px; height: 17px; background: #000; }

.scroll { display: flex; flex-direction: column; align-items: center; gap: 3px; width: 14px; padding-top: 4px; background: #f5f6f9; }
.track { flex: 1; display: flex; flex-direction: column; align-items: center; width: 12px; padding: 7px 0 8px; background: #e9ebf1; }
.track > * { flex: none; }
.track .thumb { flex: 1; width: 12px; margin: 77px 0 19px; border-radius: 6px; background: #d1d5dc; }
.track svg { margin-top: 12px; }
.sq { width: 6px; height: 6px; margin-top: 13px; border: 1px solid #8289a0; }
.track .sq + svg { margin-top: 13px; }

.panel { display: flex; flex-direction: column; width: 261px; padding: 8px 12px 0 12px; border-left: 1px solid #dde0e6; background: #f5f6f9; }
.head { display: flex; align-items: center; gap: 10px; height: 16px; margin-right: -6px; }
.head h2 { display: flex; align-items: center; gap: 1px; margin: 0 auto 0 -3px; font-size: 12px; font-weight: 400; color: #3b4964; }
.style { height: 32px; margin: 15px 0 7px; border: 1px solid #d3d7de; background: #fff; font-size: 16px; color: #000; border-radius: 2px; }
.style select { padding-left: 6px; }
.style::after { right: 7px; }
.actions { display: flex; gap: 10px; }
.actions button { width: 78px; height: 23px; padding: 0; border: 1px solid #d0d4dc; background: #fff; color: #3b4964; }
.panel h3 { margin: 20px 0 6px; font-size: 14px; line-height: 20px; font-weight: 400; color: #3b4964; }
.list { flex: 1; margin: 0; padding: 2px 12px 0 2px; list-style: none; border: 1px solid #dcdfe5; background: #fff; color: #000; }
.list li { display: flex; align-items: center; justify-content: space-between; height: 34px; padding: 0 4px 0 3px; border: 1px solid transparent; white-space: pre; font-family: "Noto Sans CJK SC", sans-serif; line-height: 24px; }
.list li.sel { border-color: #5b8cc4; }
.list svg, .list u { margin-bottom: 8px; }
.list u { font: 700 12px/12px "Liberation Sans", sans-serif; }
.list .s1, .list .s2, .list .s3, .list .s4 { font-weight: 700; font-family: "Liberation Mono", "Noto Sans CJK SC", monospace; }
.s1 { font-size: 21px; }
.s2, .s3 { font-size: 20px; }
.s4 { font-size: 18px; }
.s5 { font-size: 13px; }
.s6 { font-size: 15px; }
.s7 { font-size: 16px; }
.show { display: flex; align-items: center; justify-content: space-between; margin-top: 8px; }
.scope { width: 203px; height: 23px; border: 1px solid #d3d7de; background: #fff; }
.scope::after { right: 3px; }
.foot { display: flex; justify-content: space-between; align-items: center; margin: 10px 5px 29px 0; }
.foot label { display: flex; align-items: center; gap: 5px; }
.foot input { appearance: none; display: flex; justify-content: center; width: 13px; height: 13px; margin: 0; padding-top: 2px; border: 1px solid #2d3548; background: #fff; }
.foot input:checked::before { content: ""; width: 8px; height: 5px; border: solid #2d3548; border-width: 0 0 1px 1px; transform: rotate(-45deg); }
.foot a { display: flex; align-items: center; gap: 2px; color: #3e74e8; text-decoration: none; }

.rail { display: flex; flex-direction: column; align-items: center; gap: 4px; width: 44px; padding-top: 12px; border-left: 1px solid #dde0e6; background: #f5f6f9; color: #3b4458; }
.grip { width: 20px; height: 4px; margin-bottom: 8px; border: solid #c3c7cf; border-width: 1px 0; }
.rail .plain { width: 32px; height: 32px; border-radius: 2px; }
.rail .on { background: #dadee5; }
.tail { display: flex; justify-content: center; gap: 4px; width: 38px; margin: auto 0 14px; padding-top: 22px; border-top: 1px solid #dcdfe5; }
.tail i { width: 4px; height: 4px; border-radius: 2px; background: #59637a; }

.status { display: flex; align-items: center; height: 29px; padding-left: 10px; border-top: 1px solid #dfe2e7; background: #f5f6f9; white-space: nowrap; }
.f1 { width: 53px; } .f2 { width: 65px; } .f3 { width: 52px; } .f4 { width: 100px; } .f5 { width: 44px; } .f6 { width: 54px; } .f7 { width: 61px; }
.status > .plain { gap: 2px; margin-right: 9px; }
.status .caret { margin-left: 1px; }
.right { display: flex; align-items: center; margin-left: auto; padding-right: 14px; }
.eye { margin-right: 23px; }
.view { width: 26px; height: 22px; }
.view.on { background: #dde0e6; }
.right .bar { margin: 0 14px 0 9px; }
.pct { margin-left: 7px; }
.right .pct .caret { margin-left: 2px; }
.step { width: 16px; margin: 0 8px 0 7px; }
.right input + .step { margin: 0 9px 0 3px; }
.right input { appearance: none; width: 144px; height: 13px; margin: 0; background: linear-gradient(90deg, #3c4560 40%, #c5c9d2 40%) 0 6px / 100% 1px no-repeat; }
.right input::-webkit-slider-thumb { appearance: none; width: 12px; height: 12px; border: 1px solid #3c4560; border-radius: 6px; background: #fff; }

.pointer { position: absolute; left: 285px; top: 62px; z-index: 5; fill: none; pointer-events: none; }
.ime { position: absolute; right: 38px; bottom: 105px; z-index: 5; display: flex; align-items: center; gap: 10px; height: 25px; padding-right: 5px; border: 1px solid #b5c9e4; border-left: 0; background: #fff; color: #0a66c2; }
.ime > svg:first-child { margin-right: -6px; }
.ime strong { font-size: 15px; line-height: 20px; font-weight: 700; }
.meter { position: absolute; right: 0; bottom: 201px; z-index: 5; width: 10px; height: 59px; padding: 7px 2px 7px 4px; border-radius: 4px 0 0 4px; background: #484b58; }
.meter i { display: block; height: 45px; background: repeating-linear-gradient(#484b58 0 1px, transparent 1px 3px), linear-gradient(#23252e 30px, #6fe49a 30px); }
.brand { position: absolute; right: 10px; bottom: 8px; z-index: 5; display: flex; opacity: .85; pointer-events: none; }
.brand div { display: flex; flex-direction: column; font: 500 21px/24px "Noto Sans CJK SC", sans-serif; color: #7eabdc; }
.brand .url { font: 700 16px/18px "Liberation Sans", sans-serif; color: #6cc283; }
</style>
